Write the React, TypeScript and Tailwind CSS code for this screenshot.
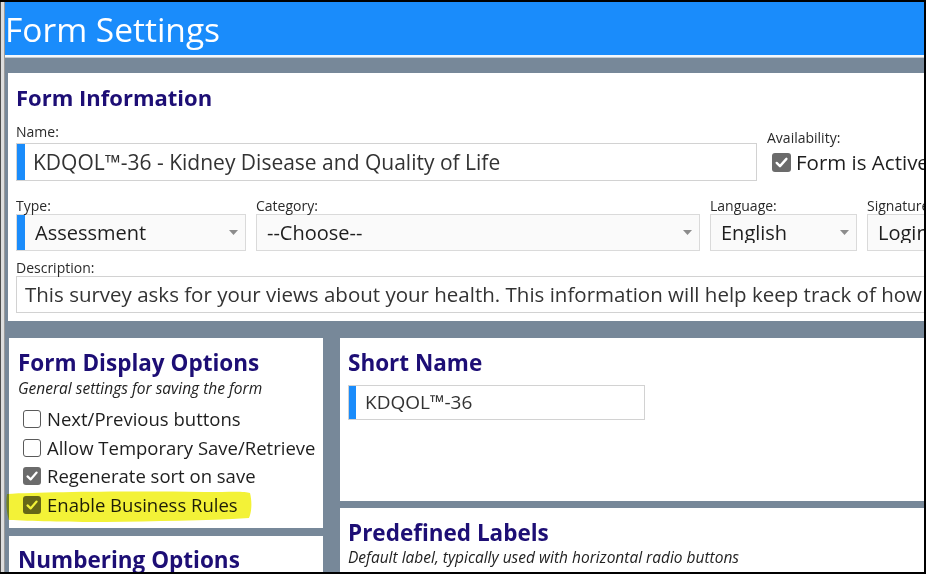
import React from "react";

const navy = "text-[#1d0e75]";

function Check({ size = 18 }: { size?: number }) {
  return (
    <span
      className="flex shrink-0 items-center justify-center rounded-[3px] bg-[#6b6b6b]"
      style={{ width: size, height: size }}
    >
      <svg width={size - 4} height={size - 4} viewBox="0 0 14 14">
        <path
          d="M2.5 7.4 L5.6 10.4 L11.6 3.6"
          fill="none"
          stroke="white"
          strokeWidth="2.2"
          strokeLinecap="round"
          strokeLinejoin="round"
        />
      </svg>
    </span>
  );
}

function Empty() {
  return (
    <span className="h-[18px] w-[18px] shrink-0 rounded-[3px] border-[1.5px] border-[#5a5a5a] bg-white" />
  );
}

function Arrow() {
  return (
    <svg width="9" height="5" viewBox="0 0 9 5" className="shrink-0">
      <path d="M0 0 L9 0 L4.5 5 Z" fill="#8c8c8c" />
    </svg>
  );
}

function Select({
  value,
  width,
  required,
}: {
  value: string;
  width: string;
  required?: boolean;
}) {
  return (
    <div
      className={`flex h-[37px] items-center border border-[#dadada] bg-[#fafafa] pr-[7px] ${width}`}
    >
      {required && <span className="h-full w-[8px] shrink-0 bg-[#1a8cfb]" />}
      <span className="flex-1 truncate pl-[10px] text-[20px] leading-none text-[#1e1e1e]">
        {value}
      </span>
      <Arrow />
    </div>
  );
}

function Label({ children }: { children: React.ReactNode }) {
  return (
    <p className="text-[14px] leading-[16px] text-[#2a2a2a]">{children}</p>
  );
}

function Option({ label, on }: { label: string; on?: boolean }) {
  return (
    <div className="flex items-center gap-[6px]">
      {on ? <Check /> : <Empty />}
      <span className="whitespace-nowrap text-[18.5px] leading-[18px] text-[#1e1e1e]">
        {label}
      </span>
    </div>
  );
}

export default function App() {
  return (
    <div className="flex h-[574px] w-[926px] overflow-hidden bg-black pb-[2px] pr-[2px] pt-[2px] font-['Open_Sans','Segoe_UI',sans-serif]">
      {/* window frame */}
      <div className="w-[1px] shrink-0 bg-[#4d4d4d]" />
      <div className="w-[3px] shrink-0 bg-[#dedede]" />
      <div className="w-[1px] shrink-0 bg-[#9a9a9a]" />

      <div className="flex min-w-0 flex-1 flex-col overflow-hidden">
        {/* HEADER */}
        <div className="h-[53px] shrink-0 bg-[#1a8cfb] pt-[11px]">
          <h1 className="text-[33.5px] leading-[33px] text-white">Form Settings</h1>
        </div>
        <div className="h-[2px] shrink-0 bg-[#f4f8fc]" />
        <div className="h-[1px] shrink-0 bg-[#c3cbd2]" />

        {/* BODY */}
        <div className="flex-1 bg-[#778899] pl-[3px] pt-[15px]">
          <div className="w-[1100px]">
            {/* FORM INFORMATION */}
            <div className="h-[248px] bg-white pl-[8px] pt-[12px]">
              <h2 className={`text-[22px] font-bold leading-[24px] ${navy}`}>
                Form Information
              </h2>

              <div className="mt-[15px] flex gap-[10px]">
                <div className="w-[741px] shrink-0">
                  <Label>Name:</Label>
                  <div className="mt-[3px] flex h-[38px] items-center border border-[#d2d2d2] bg-white">
                    <span className="h-full w-[8px] bg-[#1a8cfb]" />
                    <span className="pl-[8px] text-[21px] leading-none text-[#333]">
                      KDQOL™-36 - Kidney Disease and Quality of Life
                    </span>
                  </div>
                </div>
                <div className="pt-[6px]">
                  <Label>Availability:</Label>
                  <div className="ml-[5px] mt-[6px] flex items-center gap-[5px]">
                    <Check size={19} />
                    <span className="whitespace-nowrap text-[20.5px] leading-none text-[#1e1e1e]">
                      Form is Active
                    </span>
                  </div>
                </div>
              </div>

              <div className="mt-[17px] flex gap-[10px]">
                <div className="shrink-0">
                  <Label>Type:</Label>
                  <Select value="Assessment" width="w-[230px]" required />
                </div>
                <div className="shrink-0">
                  <Label>Category:</Label>
                  <Select value="--Choose--" width="w-[444px]" />
                </div>
                <div className="shrink-0">
                  <Label>Language:</Label>
                  <Select value="English" width="w-[147px]" />
                </div>
                <div className="shrink-0">
                  <Label>Signature:</Label>
                  <Select value="Login" width="w-[200px]" />
                </div>
              </div>

              <div className="mt-[9px]">
                <Label>Description:</Label>
                <div className="flex h-[37px] items-center overflow-hidden border border-[#d2d2d2] bg-white pl-[8px]">
                  <span className="whitespace-nowrap text-[20.5px] leading-none text-[#333]">
                    This survey asks for your views about your health. This
                    information will help keep track of how you feel and how
                    well you are able to do your usual activities.
                  </span>
                </div>
              </div>
            </div>

            <div className="mt-[17px] flex items-start gap-[17px] pl-[1px]">
              {/* LEFT COLUMN */}
              <div className="flex w-[314px] shrink-0 flex-col gap-[8px]">
                <div className="relative h-[190px] bg-white pl-[9px] pt-[13px]">
                  <h2 className={`text-[22.5px] font-bold leading-[24px] ${navy}`}>
                    Form Display Options
                  </h2>
                  <p className="mt-[4px] whitespace-nowrap text-[15.5px] italic leading-[18px] text-[#222]">
                    General settings for saving the form
                  </p>

                  {/* marker highlight */}
                  <svg
                    className="pointer-events-none absolute left-[-4px] top-[153px] mix-blend-multiply"
                    width="248"
                    height="32"
                    viewBox="0 0 248 32"
                  >
                    <path
                      d="M2 3 C40 1 120 0 200 1 C225 1 240 0 245 2 C247 10 247 20 244 27 C200 30 150 30 100 31 C60 31 25 30 4 29 C1 20 1 10 2 3 Z"
                      fill="#f3f237"
                    />
                  </svg>

                  <div className="relative mt-[13px] flex flex-col gap-[10.5px] pl-[5px]">
                    <Option label="Next/Previous buttons" />
                    <Option label="Allow Temporary Save/Retrieve" />
                    <Option label="Regenerate sort on save" on />
                    <div className="mix-blend-multiply">
                      <Option label="Enable Business Rules" on />
                    </div>
                  </div>
                </div>

                <div className="h-[120px] bg-white pl-[9px] pt-[12px]">
                  <h2 className={`text-[22.5px] font-bold leading-[24px] ${navy}`}>
                    Numbering Options
                  </h2>
                </div>
              </div>

              {/* RIGHT COLUMN */}
              <div className="flex w-[700px] shrink-0 flex-col gap-[7px]">
                <div className="h-[163px] bg-white pl-[8px] pt-[13px]">
                  <h2 className={`text-[22.5px] font-bold leading-[24px] ${navy}`}>
                    Short Name
                  </h2>
                  <div className="mt-[10px] flex h-[35px] w-[297px] items-center border border-[#d2d2d2] bg-white">
                    <span className="h-full w-[7px] bg-[#1a8cfb]" />
                    <span className="pl-[9px] text-[19px] leading-none text-[#333]">
                      KDQOL™-36
                    </span>
                  </div>
                </div>

                <div className="h-[120px] bg-white pl-[8px] pt-[13px]">
                  <h2 className={`text-[22.5px] font-bold leading-[24px] ${navy}`}>
                    Predefined Labels
                  </h2>
                  <p className="mt-[3px] whitespace-nowrap text-[15.5px] italic leading-[18px] text-[#222]">
                    Default label, typically used with horizontal radio buttons
                  </p>
                </div>
              </div>
            </div>
          </div>
        </div>
      </div>
    </div>
  );
}
